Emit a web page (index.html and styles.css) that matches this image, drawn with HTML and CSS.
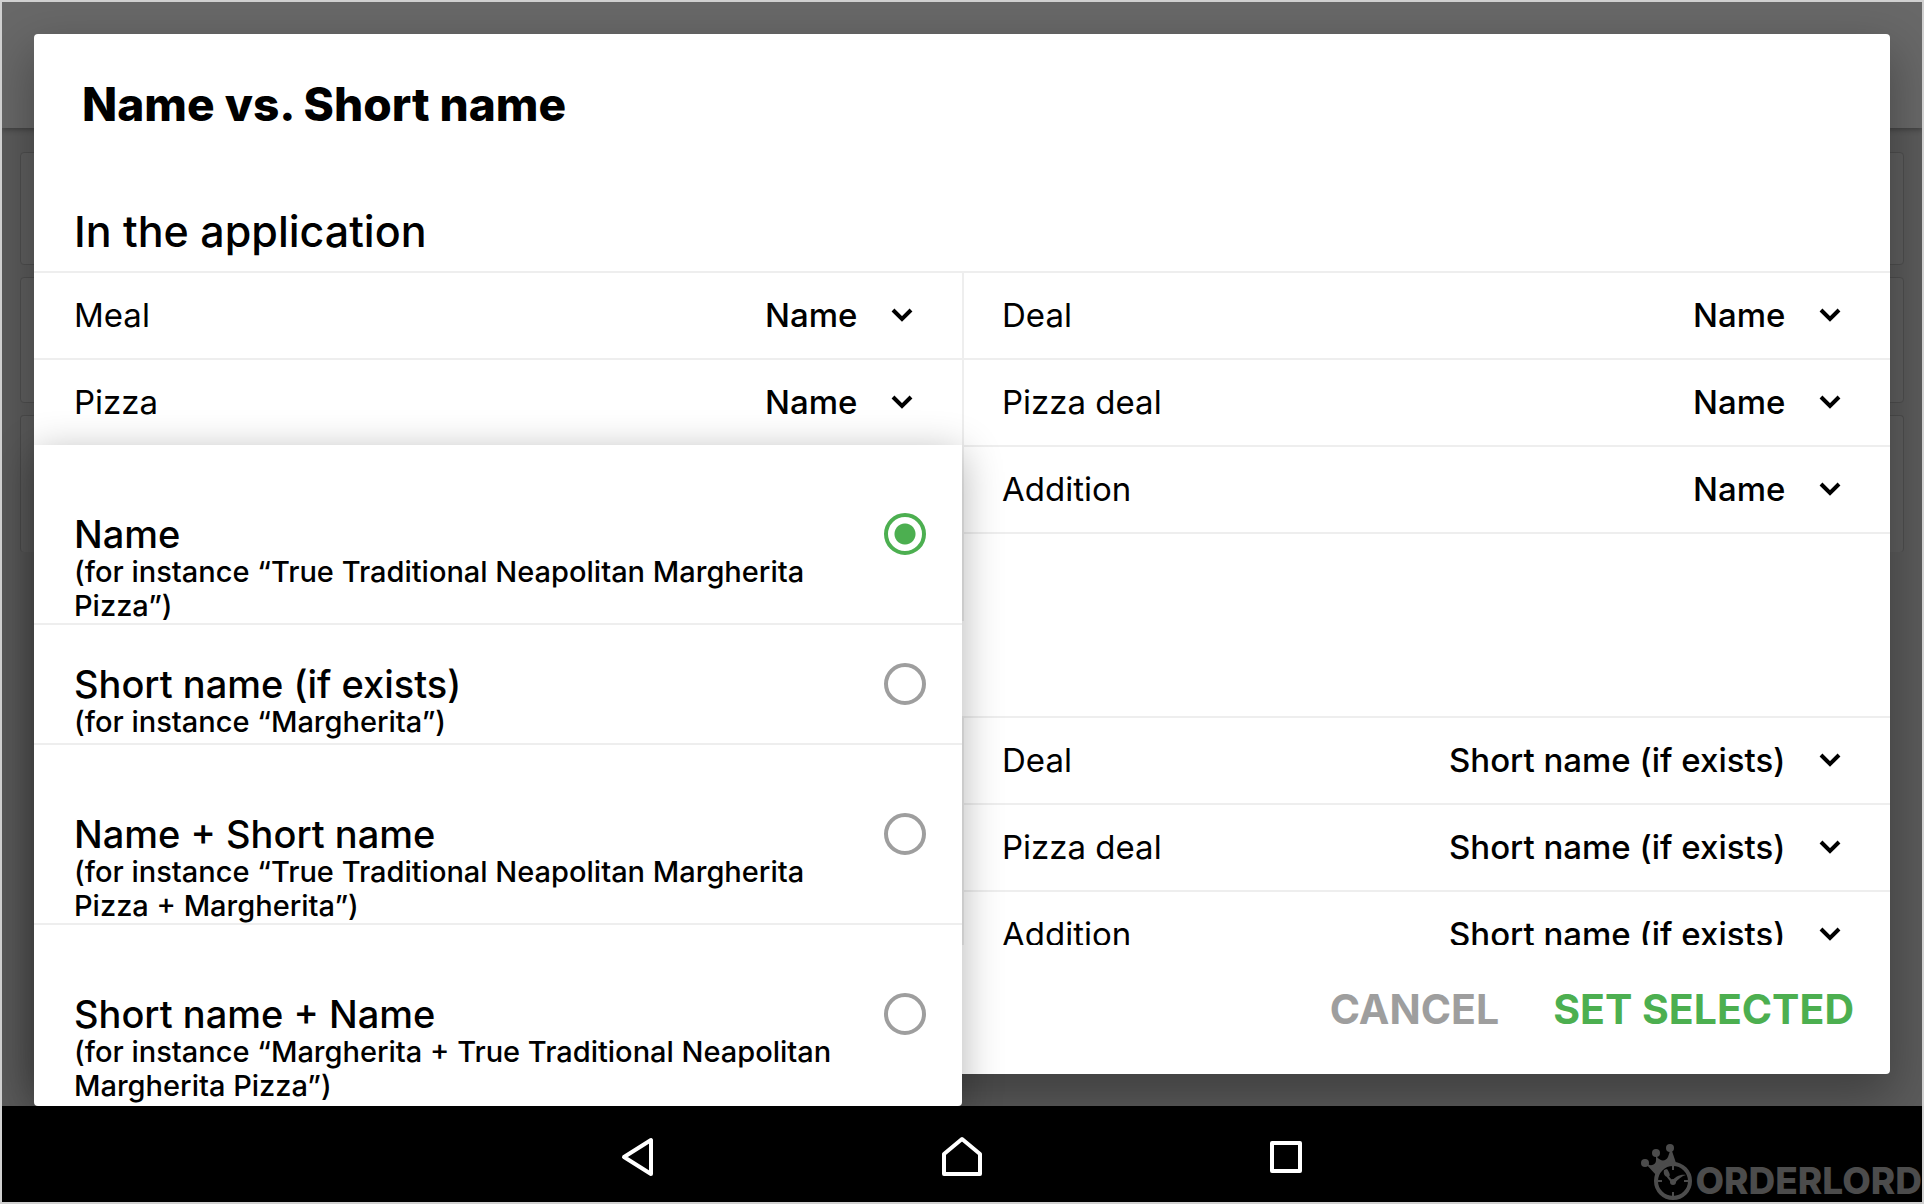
FILE: index.html
```html
<!DOCTYPE html>
<html lang="en">
<head>
<meta charset="utf-8">
<title>Name vs. Short name</title>
<link rel="stylesheet" href="styles.css">
</head>
<body>
<svg class="defs" aria-hidden="true">
  <symbol id="chevron" viewBox="0 0 24 24"><path d="M3 7l9 9 9-9" fill="none" stroke="currentColor" stroke-width="4"/></symbol>
</svg>
<div class="device">
  <main class="screen">
    <div class="backdrop" aria-hidden="true">
      <div class="appbar"></div>
      <div class="panel panel-short"></div>
      <div class="panel panel-medium"></div>
      <div class="panel panel-tall"></div>
    </div>

    <section class="dialog" role="dialog" aria-labelledby="dialog-title">
      <h1 class="dialog-title" id="dialog-title">Name vs. Short name</h1>
      <div class="dialog-body">
        <h2 class="section-title">In the application</h2>
        <div class="settings">
          <div class="column column-left">
            <div class="row"><label class="row-label" for="app-meal">Meal</label><select class="row-select" id="app-meal"><option>Name</option></select><svg class="chevron"><use href="#chevron"/></svg></div>
            <div class="row"><label class="row-label" for="app-pizza">Pizza</label><select class="row-select" id="app-pizza"><option>Name</option></select><svg class="chevron"><use href="#chevron"/></svg></div>
            <div class="row"></div>
            <div class="row"></div>
          </div>
          <div class="column">
            <div class="row"><label class="row-label" for="app-deal">Deal</label><select class="row-select" id="app-deal"><option>Name</option></select><svg class="chevron"><use href="#chevron"/></svg></div>
            <div class="row"><label class="row-label" for="app-pizza-deal">Pizza deal</label><select class="row-select" id="app-pizza-deal"><option>Name</option></select><svg class="chevron"><use href="#chevron"/></svg></div>
            <div class="row"><label class="row-label" for="app-addition">Addition</label><select class="row-select" id="app-addition"><option>Name</option></select><svg class="chevron"><use href="#chevron"/></svg></div>
          </div>
        </div>
        <div class="section-title"></div>
        <div class="settings">
          <div class="column column-left">
            <div class="row"></div>
            <div class="row"></div>
            <div class="row"></div>
          </div>
          <div class="column">
            <div class="row"><label class="row-label" for="alt-deal">Deal</label><select class="row-select" id="alt-deal"><option>Short name (if exists)</option></select><svg class="chevron"><use href="#chevron"/></svg></div>
            <div class="row"><label class="row-label" for="alt-pizza-deal">Pizza deal</label><select class="row-select" id="alt-pizza-deal"><option>Short name (if exists)</option></select><svg class="chevron"><use href="#chevron"/></svg></div>
            <div class="row"><label class="row-label" for="alt-addition">Addition</label><select class="row-select" id="alt-addition"><option>Short name (if exists)</option></select><svg class="chevron"><use href="#chevron"/></svg></div>
          </div>
        </div>
      </div>
      <footer class="dialog-actions">
        <button class="action" type="button">CANCEL</button>
        <button class="action action-primary" type="button">SET SELECTED</button>
      </footer>
    </section>

    <form class="popup">
      <label class="option"><span class="option-name">Name</span><input class="radio" type="radio" name="display" checked><span class="option-hint">(for instance “True Traditional Neapolitan Margherita Pizza”)</span></label>
      <label class="option"><span class="option-name">Short name (if exists)</span><input class="radio" type="radio" name="display"><span class="option-hint">(for instance “Margherita”)</span></label>
      <label class="option"><span class="option-name">Name + Short name</span><input class="radio" type="radio" name="display"><span class="option-hint">(for instance “True Traditional Neapolitan Margherita Pizza + Margherita”)</span></label>
      <label class="option"><span class="option-name">Short name + Name</span><input class="radio" type="radio" name="display"><span class="option-hint">(for instance “Margherita + True Traditional Neapolitan Margherita Pizza”)</span></label>
    </form>
  </main>

  <nav class="navbar">
    <button class="nav-button" type="button" aria-label="Back"><svg width="48" height="48" viewBox="0 0 48 48"><path d="M37 7v34L10 24z"/></svg></button>
    <button class="nav-button" type="button" aria-label="Home"><svg width="48" height="48" viewBox="0 0 48 48"><path d="M6 41V21L24 6 42 21v20z"/></svg></button>
    <button class="nav-button" type="button" aria-label="Recent apps"><svg width="48" height="48" viewBox="0 0 48 48"><path d="M10 10h28v28H10z"/></svg></button>
    <div class="brand">
      <svg class="brand-mark" width="54" height="58" viewBox="0 0 54 58">
        <path d="M5 19l11 12c4-7 11-11 20-12L31 4l-3 9c-2 4-7 5-11 0L16 9l0 7c0 5-5 7-11 3z" fill="currentColor"/>
        <circle cx="5" cy="19" r="4" fill="currentColor"/><circle cx="16" cy="9" r="4" fill="currentColor"/><circle cx="30" cy="4" r="4" fill="currentColor"/>
        <circle cx="33" cy="37" r="17" fill="#000" stroke="currentColor" stroke-width="4"/>
        <path d="M33 22v4M33 48v4M18 37h4M44 37h4" stroke="currentColor" stroke-width="2"/>
        <path d="M25 26l3 7 5 6" fill="none" stroke="currentColor" stroke-width="2"/>
        <path d="M24 26c-1 4 1 7 4 7s2-4-1-8zM32 37c3-4 8-7 14-6-4 1-8 4-11 8z" fill="currentColor"/>
        <circle cx="33" cy="38" r="3" fill="currentColor"/>
      </svg>
      <span class="brand-name">ORDERLORD</span>
    </div>
  </nav>
</div>
</body>
</html>
```
FILE: styles.css
```css
* { box-sizing: border-box; }

body {
  margin: 0;
  color: #000;
  font-family: Inter, "Open Sans", sans-serif;
  font-size: 33px;
}

.defs { display: none; }

.device {
  display: flex;
  flex-direction: column;
  height: 100vh;
  border: 2px solid #d0d0d0;
  background: #000;
}

.screen {
  position: relative;
  display: flex;
  flex: 1;
  min-height: 0;
  padding: 32px;
  overflow: hidden;
}

.backdrop {
  position: absolute;
  inset: 0;
  display: flex;
  flex-direction: column;
  gap: 12px;
  background: #5b5b5b;
}

.appbar {
  height: 126px;
  margin-bottom: 12px;
  background: #686868;
  box-shadow: 0 2px 5px rgba(0, 0, 0, .3);
}

.panel {
  margin: 0 18px;
  border: 1px solid #4f4f4f;
  border-radius: 4px;
  background: #5f5f5f;
}

.panel-short { height: 113px; }
.panel-medium { height: 126px; }
.panel-tall { height: 137px; border-bottom: 0; }

.dialog {
  position: relative;
  display: flex;
  flex: 1;
  flex-direction: column;
  min-width: 0;
  border-radius: 4px;
  background: #fff;
  box-shadow: 0 20px 48px 4px rgba(0, 0, 0, .3);
}

.dialog-title {
  margin: 0;
  padding: 41px 48px 43px;
  font-size: 46px;
  font-weight: 800;
  line-height: 58px;
}

.dialog-body {
  flex: 1;
  min-height: 0;
  overflow: hidden;
}

.section-title {
  height: 95px;
  margin: 0;
  padding: 29px 40px 0;
  font-size: 43px;
  font-weight: 500;
  line-height: 52px;
}

.settings {
  display: grid;
  grid-template-columns: 1fr 1fr;
  border-top: 2px solid #eee;
}

.column-left { border-right: 2px solid #eee; margin-right: -2px; }

.row {
  display: flex;
  align-items: center;
  height: 87px;
  padding: 0 48px 2px 40px;
  border-bottom: 2px solid #eee;
}

.column-left .row:last-child { border-bottom-color: transparent; }

.row-label { flex: 1; }

.row-select {
  appearance: none;
  margin: 0;
  padding: 0;
  border: 0;
  background: none;
  color: inherit;
  font: inherit;
  font-weight: 500;
}

.chevron {
  width: 24px;
  height: 24px;
  margin-left: 32px;
}

.dialog-actions {
  display: flex;
  justify-content: flex-end;
  gap: 54px;
  padding: 40px 36px;
}

.action {
  padding: 0;
  border: 0;
  background: none;
  color: #9e9e9e;
  font: 700 41px/49px Inter, "Open Sans", sans-serif;
}

.action-primary { color: #4caf50; }

.popup {
  position: absolute;
  bottom: 0;
  left: 32px;
  width: calc(50% - 32px);
  padding-bottom: 1px;
  border-radius: 0 0 4px 4px;
  background: #fff;
  box-shadow: 0 8px 40px rgba(0, 0, 0, .3);
}

.option {
  display: grid;
  grid-template-rows: 1fr auto 1fr;
  grid-template-columns: 1fr auto;
  column-gap: 32px;
  min-height: 120px;
  padding: 0 36px 0 40px;
  border-bottom: 2px solid #eee;
}

.option:last-child { border-bottom-color: transparent; }

.option-name {
  grid-row: 2;
  font-size: 38px;
  font-weight: 500;
  line-height: 42px;
}

.option-hint {
  grid-row: 3;
  grid-column: 1;
  font-size: 29px;
  font-weight: 500;
  line-height: 34px;
}

.radio {
  grid-row: 2;
  grid-column: 2;
  appearance: none;
  width: 42px;
  height: 42px;
  margin: 0;
  border: 4px solid #9e9e9e;
  border-radius: 50%;
}

.radio:checked {
  border-color: #4caf50;
  background: radial-gradient(circle, #4caf50 10px, transparent 11px);
}

.navbar {
  position: relative;
  display: flex;
  align-items: center;
  justify-content: center;
  gap: 276px;
  height: 96px;
  padding-top: 6px;
}

.nav-button {
  display: flex;
  padding: 0;
  border: 0;
  background: none;
}

.nav-button path {
  fill: none;
  stroke: #fff;
  stroke-width: 4;
  stroke-linejoin: round;
}

.brand {
  position: absolute;
  right: 0;
  bottom: 0;
  display: flex;
  align-items: flex-end;
  gap: 1px;
  color: #4c4c4c;
}

.brand-name {
  font-size: 37px;
  font-weight: 800;
  line-height: 42px;
}
```
